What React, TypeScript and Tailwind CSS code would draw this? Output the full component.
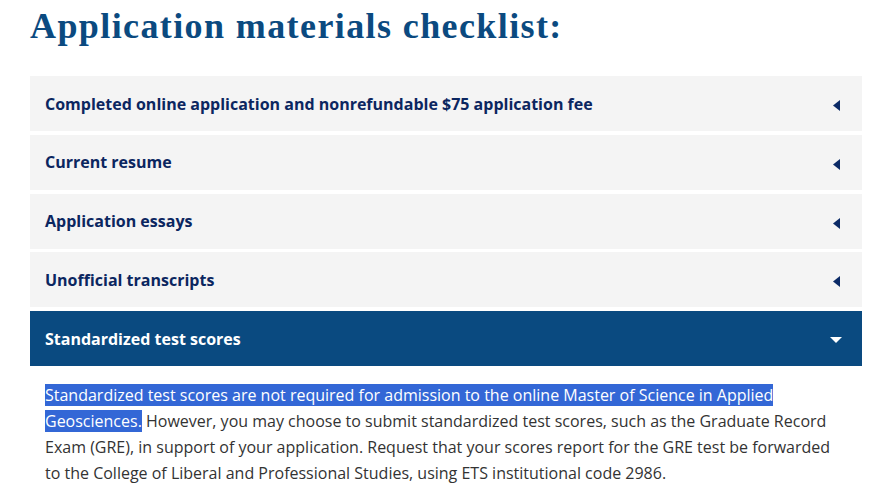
import React from 'react';

const items = [
  'Completed online application and nonrefundable $75 application fee',
  'Current resume',
  'Application essays',
  'Unofficial transcripts',
];

function LeftCaret() {
  return (
    <svg width="7" height="11" viewBox="0 0 7 11" className="block">
      <path d="M7 0 L0 5.5 L7 11 Z" fill="#0b2a66" />
    </svg>
  );
}

function DownCaret() {
  return (
    <svg width="12" height="6" viewBox="0 0 12 6" className="block">
      <path d="M0 0 L12 0 L6 6 Z" fill="#ffffff" />
    </svg>
  );
}

export default function App() {
  return (
    <div className="w-[877px] h-[500px] bg-white overflow-hidden pl-[30px] pr-[15px] pt-[4px]">
      <h1 className="font-['Liberation_Serif',serif] font-bold text-[36px] tracking-[1.4px] leading-[44px] text-[#0b4a80]">
        Application materials checklist:
      </h1>

      <div className="mt-[28px] w-[832px] flex flex-col gap-[3.75px] font-['Open_Sans',sans-serif]">
        {items.map((label) => (
          <div
            key={label}
            className="h-[55px] bg-[#f4f4f4] flex items-center justify-between pl-[15px] pr-[22px]"
          >
            <span className="text-[16px] font-bold text-[#0b2660]">{label}</span>
            <span className="mt-[4px]">
              <LeftCaret />
            </span>
          </div>
        ))}
        <div className="h-[55px] bg-[#0a4a80] flex items-center justify-between pl-[15px] pr-[20px]">
          <span className="text-[16px] font-bold text-white">Standardized test scores</span>
          <span className="mt-[3px]">
            <DownCaret />
          </span>
        </div>
      </div>

      <p className="mt-[16px] px-[15px] w-[832px] font-['Open_Sans',sans-serif] text-[16px] leading-[26px] text-[#333333]">
        <span className="bg-[#3367d6] text-white">
          Standardized test scores are not required for admission to the online Master of Science in Applied
          Geosciences.
        </span>{' '}
        However, you may choose to submit standardized test scores, such as the Graduate Record Exam (GRE), in
        support of your application. Request that your scores report for the GRE test be forwarded to the College
        of Liberal and Professional Studies, using ETS institutional code 2986.
      </p>
    </div>
  );
}
